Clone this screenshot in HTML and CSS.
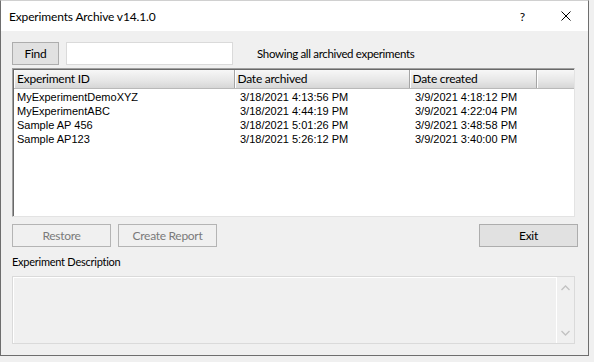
FILE: index.html
```html
<!DOCTYPE html>
<html lang="en">
<head>
    <meta charset="UTF-8">
    <title>Experiments Archive v14.1.0</title>
    <link rel="stylesheet" href="styles.css">
</head>
<body>

    <div class="window">
        <div class="titlebar">
            <span class="title">Experiments Archive v14.1.0</span>
            <span class="caption-help">?</span>
            <svg class="caption-close" width="10" height="10" viewBox="0 0 10 10">
                <path d="M0.5 0.5 L9.5 9.5 M9.5 0.5 L0.5 9.5" stroke="#000" stroke-width="1" fill="none"/>
            </svg>
        </div>

        <div class="client">
            <div class="search-row">
                <button class="btn btn-find">Find</button>
                <input type="text" class="search-box">
                <span class="status">Showing all archived experiments</span>
            </div>

            <div class="list">
                <table class="list-table">
                    <colgroup>
                        <col class="col-id">
                        <col class="col-archived">
                        <col class="col-created">
                        <col>
                    </colgroup>
                    <thead>
                        <tr>
                            <th class="first">Experiment ID</th>
                            <th>Date archived</th>
                            <th>Date created</th>
                            <th class="filler"></th>
                        </tr>
                    </thead>
                    <tbody>
                        <tr>
                            <td class="first">MyExperimentDemoXYZ</td>
                            <td>3/18/2021 4:13:56 PM</td>
                            <td>3/9/2021 4:18:12 PM</td>
                            <td></td>
                        </tr>
                        <tr>
                            <td class="first">MyExperimentABC</td>
                            <td>3/18/2021 4:44:19 PM</td>
                            <td>3/9/2021 4:22:04 PM</td>
                            <td></td>
                        </tr>
                        <tr>
                            <td class="first">Sample AP 456</td>
                            <td>3/18/2021 5:01:26 PM</td>
                            <td>3/9/2021 3:48:58 PM</td>
                            <td></td>
                        </tr>
                        <tr>
                            <td class="first">Sample AP123</td>
                            <td>3/18/2021 5:26:12 PM</td>
                            <td>3/9/2021 3:40:00 PM</td>
                            <td></td>
                        </tr>
                    </tbody>
                </table>
            </div>

            <div class="action-row">
                <button class="btn btn-wide" disabled>Restore</button>
                <button class="btn btn-wide" disabled>Create Report</button>
                <button class="btn btn-wide btn-exit">Exit</button>
            </div>

            <div class="desc-label">Experiment Description</div>

            <div class="desc-box">
                <div class="desc-text"></div>
                <div class="vscroll">
                    <svg width="9" height="6" viewBox="0 0 9 6">
                        <path d="M0.5 5 L4.5 1 L8.5 5" stroke="#c2c2c2" stroke-width="1.3" fill="none"/>
                    </svg>
                    <svg width="9" height="6" viewBox="0 0 9 6">
                        <path d="M0.5 1 L4.5 5 L8.5 1" stroke="#c2c2c2" stroke-width="1.3" fill="none"/>
                    </svg>
                </div>
            </div>
        </div>
    </div>

</body>
</html>
```

FILE: styles.css
```css
*, *::before, *::after {
    box-sizing: border-box;
    margin: 0;
    padding: 0;
}

body {
    background: #f0f0f0;
    font-family: Lato, "Noto Sans", sans-serif;
    font-size: 12px;
    color: #000;
}

.window {
    width: 589px;
    height: 356px;
    background: #f0f0f0;
    border: 1px solid #6e6e6e;
    border-top-color: #d0d0d0;
    display: flex;
    flex-direction: column;
}

/* title bar */
.titlebar {
    height: 30px;
    background: #ffffff;
    display: flex;
    align-items: center;
    padding-left: 8px;
}

.title {
    flex: 1;
    font-size: 12px;
    letter-spacing: -0.15px;
}

.caption-help {
    font-size: 12px;
    margin-right: 36px;
}

.caption-close {
    margin-right: 17px;
}

/* client area */
.client {
    flex: 1;
    padding: 11px 10px 0 11px;
    display: flex;
    flex-direction: column;
}

.btn {
    height: 23px;
    font-family: Lato, "Noto Sans", sans-serif;
    font-size: 12px;
    letter-spacing: -0.3px;
    color: #000;
    background: #e1e1e1;
    border: 1px solid #adadad;
}

.btn:disabled {
    background: #f0f0f0;
    border-color: #b4b4b4;
    color: #7a7a7a;
}

.search-row {
    display: flex;
    align-items: center;
    height: 23px;
}

.btn-find {
    width: 47px;
}

.search-box {
    width: 167px;
    height: 23px;
    margin-left: 7px;
    background: #fff;
    border: 1px solid #dadada;
}

.status {
    margin-left: 24px;
    font-size: 11.5px;
    letter-spacing: -0.33px;
}

/* list view */
.list {
    margin-top: 3px;
    width: 563px;
    height: 149px;
    background: #fff;
    border-top: 1px solid #a0a0a0;
    border-left: 1px solid #a0a0a0;
    border-right: 1px solid #e3e3e3;
    border-bottom: 1px solid #e3e3e3;
    box-shadow: inset 1px 1px 0 #696969;
    padding: 1px 0 0 1px;
    overflow: hidden;
}

.list-table {
    width: 100%;
    border-collapse: collapse;
    table-layout: fixed;
}

.col-id {
    width: 220px;
}

.col-archived {
    width: 175px;
}

.col-created {
    width: 127px;
}

.list-table th {
    height: 18px;
    text-align: left;
    font-weight: normal;
    font-size: 12px;
    letter-spacing: -0.25px;
    padding: 0 0 0 3px;
    background: linear-gradient(#f7f7f7, #e6e6e6 60%, #d6d6d6);
    border-right: 1px solid #a5a5a5;
    border-bottom: 1px solid #b9b9b9;
    box-shadow: inset 1px 0 0 #fff;
    white-space: nowrap;
}

.list-table th.first {
    padding-left: 3px;
}

.list-table th.filler {
    border-right: none;
}

.list-table td {
    height: 14px;
    font-family: "Liberation Sans", Arial, sans-serif;
    font-size: 11px;
    padding: 0 0 0 6px;
    white-space: nowrap;
    line-height: 14px;
}

.list-table tbody tr:first-child td {
    padding-top: 1px;
    height: 15px;
}

.list-table td.first {
    padding-left: 3px;
}

/* action buttons */
.action-row {
    display: flex;
    margin-top: 7px;
    gap: 7px;
}

.btn-wide {
    width: 99px;
}

.btn-exit {
    margin-left: auto;
}

.desc-label {
    margin-top: 7px;
    height: 16px;
    line-height: 16px;
    font-size: 11px;
    letter-spacing: -0.25px;
}

.desc-box {
    margin-top: 6px;
    width: 563px;
    height: 68px;
    border: 1px solid #dadada;
    box-shadow: inset 1px 1px 0 #fff;
    display: flex;
}

.desc-text {
    flex: 1;
}

.vscroll {
    width: 18px;
    background: #f0f0f0;
    border-left: 1px solid #fff;
    display: flex;
    flex-direction: column;
    justify-content: space-between;
    align-items: center;
    padding: 8px 0 7px;
}
```
